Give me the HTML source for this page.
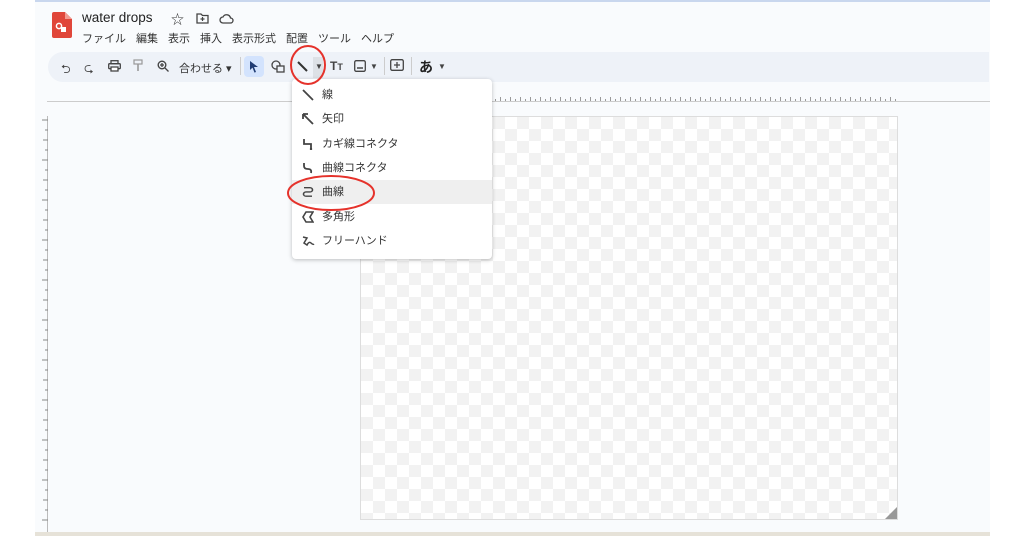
<!DOCTYPE html>
<html><head><meta charset="utf-8">
<style>
*{margin:0;padding:0;box-sizing:border-box}
body{width:1024px;height:536px;background:#fff;position:relative;overflow:hidden;font-family:"Liberation Sans","Noto Sans CJK JP",sans-serif;color:#333}
.app{position:absolute;left:35px;top:0;width:955px;height:533px;background:#f9fbfd;border-top:2px solid #c9d7ee}
.abs{position:absolute}
.title{left:82px;top:10px;font-size:13.5px;color:#222}
.menu{left:82px;top:30px;font-size:11px;color:#333;white-space:nowrap}
.menu span{margin-right:10px}
.tb{left:48px;top:52px;width:941px;height:30px;background:#eef2f8;border-radius:15px 0 0 15px}
.ruler-top{left:47px;top:101px;width:943px;height:1px;background:#ccc}
.leftline{left:47px;top:116px;width:1px;height:416px;background:#bbb}
.canvas{left:360px;top:116px;width:538px;height:404px;border:1px solid #ddd;
background-color:#fff;background-image:linear-gradient(45deg,#f2f2f2 25%,transparent 25%,transparent 75%,#f2f2f2 75%),linear-gradient(45deg,#f2f2f2 25%,transparent 25%,transparent 75%,#f2f2f2 75%);background-size:24px 24px;background-position:0 0,12px 12px}
.drop{left:292px;top:79px;width:200px;height:180px;background:#fff;border-radius:4px;box-shadow:0 1px 4px rgba(0,0,0,.25)}
.item{position:absolute;left:0;width:200px;height:24px;font-size:11px;color:#333;line-height:24px;padding-left:30px}
.item svg{position:absolute;left:10px;top:6px}
.bottom{left:35px;top:532px;width:955px;height:4px;background:#e6e2d8}
.tk1{left:360px;top:99px;width:538px;height:2px;background:repeating-linear-gradient(90deg,#999 0 1px,transparent 1px 5px)}
.tk2{left:360px;top:97px;width:538px;height:4px;background:repeating-linear-gradient(90deg,#999 0 1px,transparent 1px 10px)}
</style></head><body>
<div class="app"></div>
<svg class="abs" style="left:52px;top:12px" width="20" height="26" viewBox="0 0 20 26"><path d="M0 2a2 2 0 0 1 2-2h11l7 7v17a2 2 0 0 1-2 2H2a2 2 0 0 1-2-2z" fill="#e0463a"/><path d="M13 0v7h7z" fill="#f29b91"/><circle cx="7" cy="14" r="2.6" fill="none" stroke="#fff" stroke-width="1.5"/><rect x="9" y="15" width="5" height="5" fill="#fff"/></svg>
<div class="abs title">water drops</div>
<div class="abs" style="left:171px;top:9px;font-size:13px">☆</div>
<svg class="abs" style="left:196px;top:13px" width="13" height="11"><path d="M1 1h4l1.5 1.5H12v7.5H1z" fill="none" stroke="#444" stroke-width="1.3"/><path d="M6.5 4v4M4.5 6h4" stroke="#444" stroke-width="1.2"/></svg>
<svg class="abs" style="left:219px;top:13px" width="15" height="11"><path d="M4 10a3 3 0 0 1 0-6a4 4 0 0 1 7.5 1a2.5 2.5 0 0 1 0 5z" fill="none" stroke="#444" stroke-width="1.3"/></svg>
<div class="abs menu"><span>ファイル</span><span>編集</span><span>表示</span><span>挿入</span><span>表示形式</span><span>配置</span><span>ツール</span><span>ヘルプ</span></div>
<div class="abs tb"></div>
<div class="abs" style="left:61px;top:60px;font-size:12px;color:#444">⮌</div>
<div class="abs" style="left:84px;top:59px;font-size:12px;color:#444">⮎</div>
<svg class="abs" style="left:108px;top:60px" width="13" height="12"><rect x="3" y="0.7" width="7" height="3" fill="none" stroke="#444" stroke-width="1.3"/><rect x="0.7" y="3.7" width="11.6" height="5" rx="1" fill="none" stroke="#444" stroke-width="1.3"/><rect x="3" y="7" width="7" height="4" fill="#fff" stroke="#444" stroke-width="1.3"/></svg>
<svg class="abs" style="left:133px;top:59px" width="10" height="13"><rect x="1" y="1" width="8" height="4" fill="none" stroke="#999" stroke-width="1.2"/><path d="M5 5v7" stroke="#999" stroke-width="1.6"/></svg>
<svg class="abs" style="left:157px;top:60px" width="12" height="12"><circle cx="5" cy="5" r="3.8" fill="none" stroke="#444" stroke-width="1.4"/><path d="M8 8l3.5 3.5M3 5h4M5 3v4" stroke="#444" stroke-width="1.3"/></svg>
<div class="abs" style="left:179px;top:60px;font-size:11px;color:#333">合わせる ▾</div>
<div class="abs" style="left:240px;top:57px;width:1px;height:18px;background:#ccc"></div>
<div class="abs" style="left:244px;top:56px;width:20px;height:21px;background:#d3e3fd;border-radius:4px"></div>
<svg class="abs" style="left:249px;top:60px" width="10" height="13"><path d="M1 1l8 6H5l2 5-1.5.6-2-5L1 10z" fill="#1f3b73"/></svg>
<svg class="abs" style="left:271px;top:60px" width="14" height="13"><circle cx="5" cy="5" r="4" fill="none" stroke="#444" stroke-width="1.3"/><rect x="6" y="6" width="7" height="6" fill="#eef2f8" stroke="#444" stroke-width="1.3"/></svg>
<svg class="abs" style="left:296px;top:60px" width="13" height="13"><path d="M2 2l9 9" stroke="#333" stroke-width="2"/></svg>
<div class="abs" style="left:313px;top:57px;width:10px;height:21px;background:#dde1e6"></div>
<div class="abs" style="left:315px;top:62px;font-size:8px;color:#444">▼</div>
<div class="abs" style="left:330px;top:59px;font-size:12px;color:#444;font-weight:bold">T<span style="font-size:9px">T</span></div>
<svg class="abs" style="left:354px;top:60px" width="12" height="12"><rect x="0.7" y="0.7" width="10.6" height="10.6" rx="1.5" fill="none" stroke="#444" stroke-width="1.3"/><path d="M3 8h6" stroke="#444" stroke-width="1.5"/></svg>
<div class="abs" style="left:370px;top:62px;font-size:8px;color:#444">▼</div>
<div class="abs" style="left:384px;top:57px;width:1px;height:18px;background:#ccc"></div>
<svg class="abs" style="left:390px;top:59px" width="14" height="14"><rect x="0.7" y="0.7" width="12.6" height="10.6" rx="1.5" fill="none" stroke="#444" stroke-width="1.3"/><path d="M7 3v6M4 6h6" stroke="#444" stroke-width="1.3"/></svg>
<div class="abs" style="left:411px;top:57px;width:1px;height:18px;background:#ccc"></div>
<div class="abs" style="left:419px;top:57px;font-size:14px;color:#222;font-weight:bold">あ</div>
<div class="abs" style="left:438px;top:62px;font-size:8px;color:#444">▼</div>
<div class="abs ruler-top"></div>
<div class="abs tk1"></div>
<div class="abs tk2"></div>
<div class="abs leftline"></div>
<svg class="abs" style="left:40px;top:116px" width="8" height="416"><g stroke="#888" stroke-width="1">
<path d="M2 4h6M5 14h3M3 24h5M5 34h3M2 44h6M5 54h3M3 64h5M5 74h3M2 84h6M5 94h3M3 104h5M5 114h3M2 124h6M5 134h3M3 144h5M5 154h3M2 164h6M5 174h3M3 184h5M5 194h3M2 204h6M5 214h3M3 224h5M5 234h3M2 244h6M5 254h3M3 264h5M5 274h3M2 284h6M5 294h3M3 304h5M5 314h3M2 324h6M5 334h3M3 344h5M5 354h3M2 364h6M5 374h3M3 384h5M5 394h3M2 404h6"/></g></svg>
<div class="abs canvas"></div>
<svg class="abs" style="left:885px;top:507px" width="12" height="12"><path d="M12 0v12H0z" fill="#999"/></svg>
<div class="abs drop">
<div class="item" style="top:4px"><svg width="12" height="12"><path d="M1 1l10 10" stroke="#444" stroke-width="1.8"/></svg>線</div>
<div class="item" style="top:28px"><svg width="12" height="12"><path d="M2 2l9 9M1 1v5M1 1h5" stroke="#444" stroke-width="1.8" fill="none"/></svg>矢印</div>
<div class="item" style="top:53px"><svg width="12" height="12"><path d="M2 1v5h7v5" stroke="#444" stroke-width="1.8" fill="none"/><circle cx="9" cy="11" r="1.2" fill="#444"/></svg>カギ線コネクタ</div>
<div class="item" style="top:77px"><svg width="12" height="12"><path d="M2 1v3q0 3 4 3t3 4" stroke="#444" stroke-width="1.8" fill="none"/></svg>曲線コネクタ</div>
<div class="item" style="top:101px;background:#efefef"><svg width="12" height="12"><path d="M2 2h6a2.5 2.5 0 0 1 0 5H4a2.5 2.5 0 0 0 0 5h6" stroke="#444" stroke-width="1.6" fill="none" transform="scale(1 .85)"/></svg>曲線</div>
<div class="item" style="top:126px"><svg width="12" height="12"><path d="M4 1h7L8 6l3 5H4L1 6z" stroke="#444" stroke-width="1.6" fill="none"/></svg>多角形</div>
<div class="item" style="top:150px"><svg width="13" height="12"><path d="M1 2l4 1-3 5 3 2q2-4 4-2t3 1" stroke="#444" stroke-width="1.5" fill="none"/></svg>フリーハンド</div>
</div>
<svg class="abs" style="left:0;top:0" width="1024" height="536"><ellipse cx="308" cy="65" rx="17" ry="19" fill="none" stroke="#e5322b" stroke-width="2"/><ellipse cx="331" cy="193" rx="43" ry="17" fill="none" stroke="#e5322b" stroke-width="2"/></svg>
<div class="abs bottom"></div>
</body></html>
